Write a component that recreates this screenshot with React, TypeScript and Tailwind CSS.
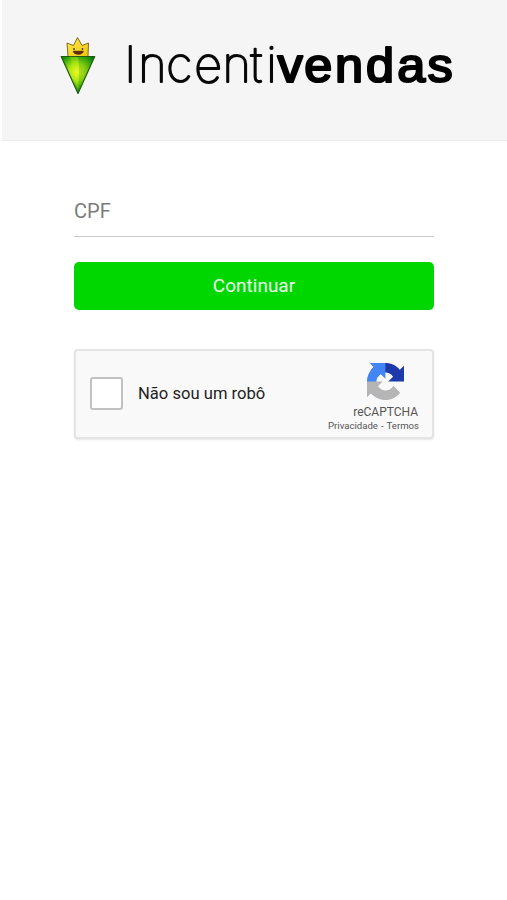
function Mascot() {
  return (
    <svg width="38" height="60" viewBox="0 0 38 60" className="block shrink-0">
      <defs>
        <radialGradient id="gem" cx="18" cy="36" r="21" gradientUnits="userSpaceOnUse">
          <stop offset="0" stopColor="#f0fa25" />
          <stop offset="0.4" stopColor="#a4e412" />
          <stop offset="0.75" stopColor="#3fae0b" />
          <stop offset="1" stopColor="#087a0a" />
        </radialGradient>
        <linearGradient id="crown" x1="0" y1="0" x2="1" y2="1">
          <stop offset="0" stopColor="#ffe94d" />
          <stop offset="1" stopColor="#f1c40c" />
        </linearGradient>
      </defs>
      <path d="M9 20.500L8 7l6.500 2.500L18.500 1.500l4.500 8L29.500 7l-.5 13.500z" fill="url(#crown)" stroke="#765d12" strokeWidth="0.900" strokeLinejoin="round" />
      <path d="M2.200 20.500h33.500L19 57.500z" fill="url(#gem)" stroke="#205c0b" strokeWidth="1.200" strokeLinejoin="round" />
      <path d="M11 20.500L19 55V21z" fill="#d8f51c" opacity="0.25" />
      <path d="M20 21h15L20 54z" fill="#117f08" opacity="0.2" />
      <circle cx="15" cy="13" r="0.900" fill="#4e3b08" />
      <circle cx="23.500" cy="13" r="0.900" fill="#4e3b08" />
      <path d="M14.300 15.300h10c-.5 4-9.500 4-10 0z" fill="#6b270b" stroke="#2d1d05" strokeWidth="0.700" />
    </svg>
  );
}

function Wordmark() {
  return (
    <svg width="340" height="60" viewBox="120 36 340 60" className="block shrink-0 overflow-visible" aria-label="Incentivendas">
      <text x="124.200 138.200 166.300 194.300 222.500 250.500 266.300" y="82" fontFamily="Inter, sans-serif" fontWeight="100" fontSize="48.500" fill="#080808" stroke="#080808" strokeWidth="2" strokeLinejoin="round">Incenti</text>
      <text transform="scale(1.05 1)" x="264.200 289.800 319.100 348.600 378.300 407.100" y="81.600" fontFamily="'Liberation Sans', sans-serif" fontWeight="400" fontSize="48" fill="#000" stroke="#000" strokeWidth="2.200" strokeLinejoin="round">vendas</text>
    </svg>
  );
}

function CaptchaLogo() {
  return (
    <svg width="37" height="37" viewBox="0 0 64 64" className="block">
      <path fill="#1c3aa9" d="M64 31.955l-.033-1.370V4.687l-7.160 7.160C50.948 4.674 42.033.093 32.050.093c-10.400 0-19.622 4.960-25.458 12.640l11.736 11.860a15.550 15.550 0 0 1 4.754-5.334c2.050-1.600 4.952-2.906 8.968-2.906.485 0 .860.057 1.135.163 4.976.393 9.288 3.140 11.828 7.124l-8.307 8.307L64 31.953" />
      <path fill="#4285f4" d="M31.862.094l-1.370.033H4.594l7.160 7.160C4.580 13.147 0 22.060 0 32.046c0 10.400 4.960 19.622 12.640 25.458L24.500 45.768a15.550 15.550 0 0 1-5.334-4.754c-1.600-2.050-2.906-4.952-2.906-8.968 0-.485.057-.860.163-1.135.393-4.976 3.140-9.288 7.124-11.828l8.307 8.307L31.860.095" />
      <path fill="#b5b5b5" d="M.001 32.045l.033 1.370v25.898l7.160-7.160c5.860 7.173 14.774 11.754 24.760 11.754 10.400 0 19.622-4.960 25.458-12.640l-11.736-11.860a15.550 15.550 0 0 1-4.754 5.334c-2.050 1.600-4.952 2.906-8.968 2.906-.485 0-.860-.057-1.135-.163-4.976-.393-9.288-3.140-11.828-7.124l8.307-8.307c-10.522.040-22.400.066-27.295-.005" />
    </svg>
  );
}

export default function App() {
  return (
    <div className="min-h-[900px] w-[507px] bg-white font-['Roboto',sans-serif]">
      <header className="ml-[2px] flex h-[141px] items-start border-b border-[#ececec] bg-[#f5f5f5] pl-[57px] pt-9">
        <Mascot />
        <div className="ml-[23px]"><Wordmark /></div>
      </header>
      <main className="ml-[74px] w-[360px] pt-[45px]">
        <input
          type="text"
          placeholder="CPF"
          className="block h-[51px] w-full border-b border-[#c9c9c9] bg-transparent text-[20px] text-[#444] outline-none placeholder:text-[#7b7b7b]"
        />
        <button className="mt-[25px] flex h-12 w-full items-center justify-center rounded-[5px] bg-[#00d600] text-[19px] text-[#eaffea]">
          Continuar
        </button>
        <section className="mt-[39px] flex h-[90px] w-full rounded-[4px] border-2 border-[#e4e4e4] bg-[#f9f9f9] shadow-[0_1px_2px_rgba(0,0,0,0.1)]">
          <label className="flex grow items-center pb-[2px] pl-[14px]">
            <input type="checkbox" className="size-[33px] appearance-none rounded-[3px] border-2 border-[#c1c1c1] bg-white" />
            <span className="ml-[15px] whitespace-nowrap pt-[2px] text-[16.600px] text-[#222]">Não sou um robô</span>
          </label>
          <div className="mr-[13px] flex w-[93px] shrink-0 flex-col pt-[12px] text-[#555]">
            <div className="ml-[41px]"><CaptchaLogo /></div>
            <div className="mr-px mt-[5px] text-right text-[12px] leading-[14px]">reCAPTCHA</div>
            <div className="whitespace-nowrap text-right text-[9.600px] leading-[14px] [word-spacing:0.6px]">Privacidade&nbsp;-&nbsp;Termos</div>
          </div>
        </section>
      </main>
    </div>
  );
}
